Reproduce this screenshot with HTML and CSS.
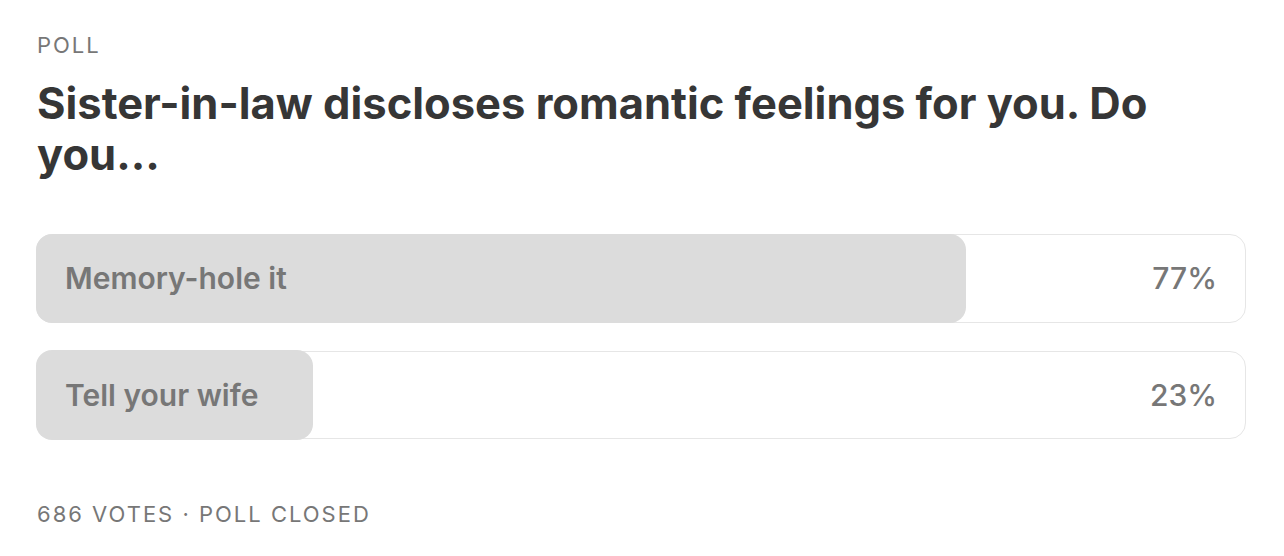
FILE: index.html
```html
<!DOCTYPE html>
<html lang="en">
<head>
  <meta charset="UTF-8">
  <title>Poll</title>
  <link rel="stylesheet" href="styles.css">
</head>
<body>
  <div class="poll">
    <div class="poll-label">POLL</div>
    <h1 class="poll-title">Sister-in-law discloses romantic feelings for you. Do you…</h1>

    <div class="options">
      <div class="option">
        <div class="option-fill" style="width: 77%"></div>
        <span class="option-text">Memory-hole it</span>
        <span class="option-pct">77%</span>
      </div>
      <div class="option">
        <div class="option-fill" style="width: 23%"></div>
        <span class="option-text">Tell your wife</span>
        <span class="option-pct">23%</span>
      </div>
    </div>

    <div class="poll-footer">686 VOTES · POLL CLOSED</div>
  </div>
</body>
</html>
```

FILE: styles.css
```css
body, html {
  margin: 0;
  padding: 0;
  background-color: #ffffff;
  font-family: Inter, "Liberation Sans", sans-serif;
}

.poll {
  padding: 32px 38px 0 36px;
}

.poll-label {
  font-size: 22px;
  letter-spacing: 2px;
  color: #777;
  padding-left: 1px;
}

.poll-title {
  font-size: 43.5px;
  line-height: 51px;
  font-weight: 700;
  color: #363636;
  margin: 20px 0 0 1px;
  max-width: 1170px;
}

.options {
  display: flex;
  flex-direction: column;
  gap: 28px;
  margin-top: 54px;
}

.option {
  position: relative;
  height: 86.5px;
  border: 1.5px solid #e6e6e6;
  border-radius: 16px;
  display: flex;
  align-items: center;
  justify-content: space-between;
  padding: 0 28px;
}

.option-fill {
  position: absolute;
  top: -1.5px;
  bottom: -1.5px;
  left: -1.5px;
  background-color: #dcdcdc;
  border-radius: 16px;
}

.option-text,
.option-pct {
  position: relative;
  font-size: 30px;
  color: #777;
}

.option-text {
  font-weight: 600;
}

.option-pct {
  font-weight: 500;
}

.poll-footer {
  margin-top: 62px;
  font-size: 22px;
  letter-spacing: 2px;
  color: #777;
  padding-left: 1px;
}
```
